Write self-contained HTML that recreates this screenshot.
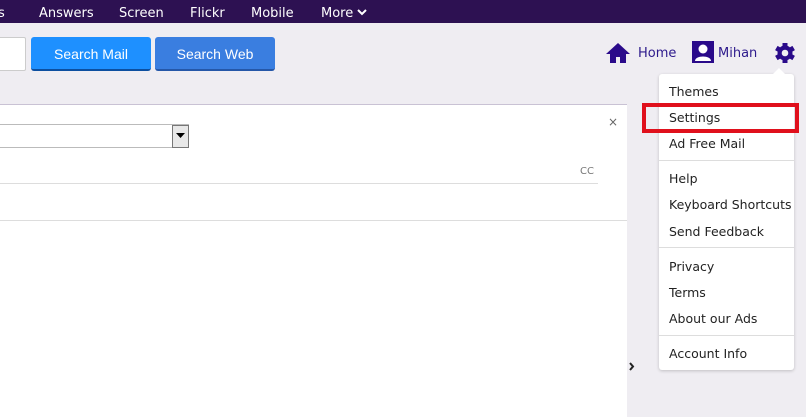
<!DOCTYPE html>
<html><head><style>
*{margin:0;padding:0;box-sizing:border-box}
body{width:806px;height:417px;overflow:hidden;background:#efedf2;font-family:"DejaVu Sans","Liberation Sans",sans-serif;position:relative}
.top{position:absolute;left:0;top:0;width:806px;height:23px;background:#2d1152;color:#fff;font-size:13px}
.top span{position:absolute;top:6px}
.inp{position:absolute;left:-5px;top:37px;width:31px;height:34px;background:#fff;border:1px solid #ccc;border-radius:2px}
.btn{position:absolute;top:37px;height:34px;border-radius:3px;color:#fff;font-family:"Liberation Sans",sans-serif;font-size:14px;text-align:center;line-height:34px}
.panel{position:absolute;left:0;top:104px;width:627px;height:313px;background:#fff;border-top:1px solid #c9c2d4}
.menu{position:absolute;left:659px;top:74px;width:135px;height:296px;background:#fff;border-radius:3px;box-shadow:0 1px 3px rgba(0,0,0,.2)}
.menu div{position:absolute;left:10px;font-size:12.5px;color:#222}
.menu hr{position:absolute;left:0;width:135px;border:0;border-top:1px solid #ddd}
.nav{position:absolute;top:46px;font-size:13px;color:#2d1a8c}
</style></head><body>
<div class="top">
<span style="left:-2px">s</span><span style="left:39px">Answers</span><span style="left:119px">Screen</span><span style="left:190px">Flickr</span><span style="left:251px">Mobile</span><span style="left:321px">More</span>
<svg style="position:absolute;left:357px;top:9px" width="10" height="7"><path d="M1 1l4 4 4-4" stroke="#fff" stroke-width="2" fill="none"/></svg>
</div>
<div class="inp"></div>
<div class="btn" style="left:31px;width:120px;background:#1e90ff;border-bottom:2px solid #0c4fa0">Search Mail</div>
<div class="btn" style="left:155px;width:120px;background:#3a7ee0;border-bottom:2px solid #2557a8">Search Web</div>
<svg style="position:absolute;left:605px;top:42px" width="26" height="22"><path d="M13 1L1 12h4v9h6v-6h4v6h6v-9h4z" fill="#2a0a8a"/></svg>
<div class="nav" style="left:638px">Home</div>
<svg style="position:absolute;left:692px;top:41px" width="22" height="22"><rect width="22" height="22" fill="#2a0a8a"/><circle cx="11" cy="8" r="4.5" fill="#fff"/><path d="M3 20c0-6 16-6 16 0z" fill="#fff"/></svg>
<div class="nav" style="left:718px">Mihan</div>
<svg style="position:absolute;left:774px;top:42px" width="22" height="22" viewBox="0 0 22 22"><g fill="#2a0a8a" transform="translate(11 11)"><rect x="-2.5" y="-10" width="5" height="20"/><rect x="-2.5" y="-10" width="5" height="20" transform="rotate(60)"/><rect x="-2.5" y="-10" width="5" height="20" transform="rotate(120)"/><circle r="7.5"/></g><circle cx="11" cy="11" r="3.3" fill="#efedf2"/></svg>
<div class="panel">
<div style="position:absolute;left:-3px;top:19px;width:192px;height:24px;border:1px solid #bbb"></div>
<div style="position:absolute;left:172px;top:20px;width:17px;height:23px;background:#e8e8e8;border:1px solid #777"></div>
<svg style="position:absolute;left:176px;top:28px" width="9" height="6"><path d="M0 0h9L4.5 5z" fill="#000"/></svg>
<div style="position:absolute;left:608px;top:10px;font-size:12px;color:#666">×</div>
<div style="position:absolute;left:580px;top:61px;font-size:10px;color:#777">CC</div>
<div style="position:absolute;left:0;top:78px;width:598px;border-top:1px solid #ddd"></div>
<div style="position:absolute;left:0;top:115px;width:627px;border-top:1px solid #ddd"></div>
</div>
<svg style="position:absolute;left:629px;top:362px" width="6" height="9"><path d="M1 1l3 3.5L1 8" stroke="#222" stroke-width="2" fill="none"/></svg>
<div class="menu">
<svg style="position:absolute;left:113px;top:-6px" width="14" height="7"><path d="M0 7L7 0l7 7z" fill="#fff"/></svg>
<div style="top:10px">Themes</div>
<div style="top:36px">Settings</div>
<div style="top:62px">Ad Free Mail</div>
<hr style="top:86px">
<div style="top:97px">Help</div>
<div style="top:123px">Keyboard Shortcuts</div>
<div style="top:150px">Send Feedback</div>
<hr style="top:173px">
<div style="top:185px">Privacy</div>
<div style="top:211px">Terms</div>
<div style="top:237px">About our Ads</div>
<hr style="top:261px">
<div style="top:272px">Account Info</div>
</div>
<div style="position:absolute;left:642px;top:103px;width:157px;height:30px;border:4px solid #e0101c"></div>
</body></html>
